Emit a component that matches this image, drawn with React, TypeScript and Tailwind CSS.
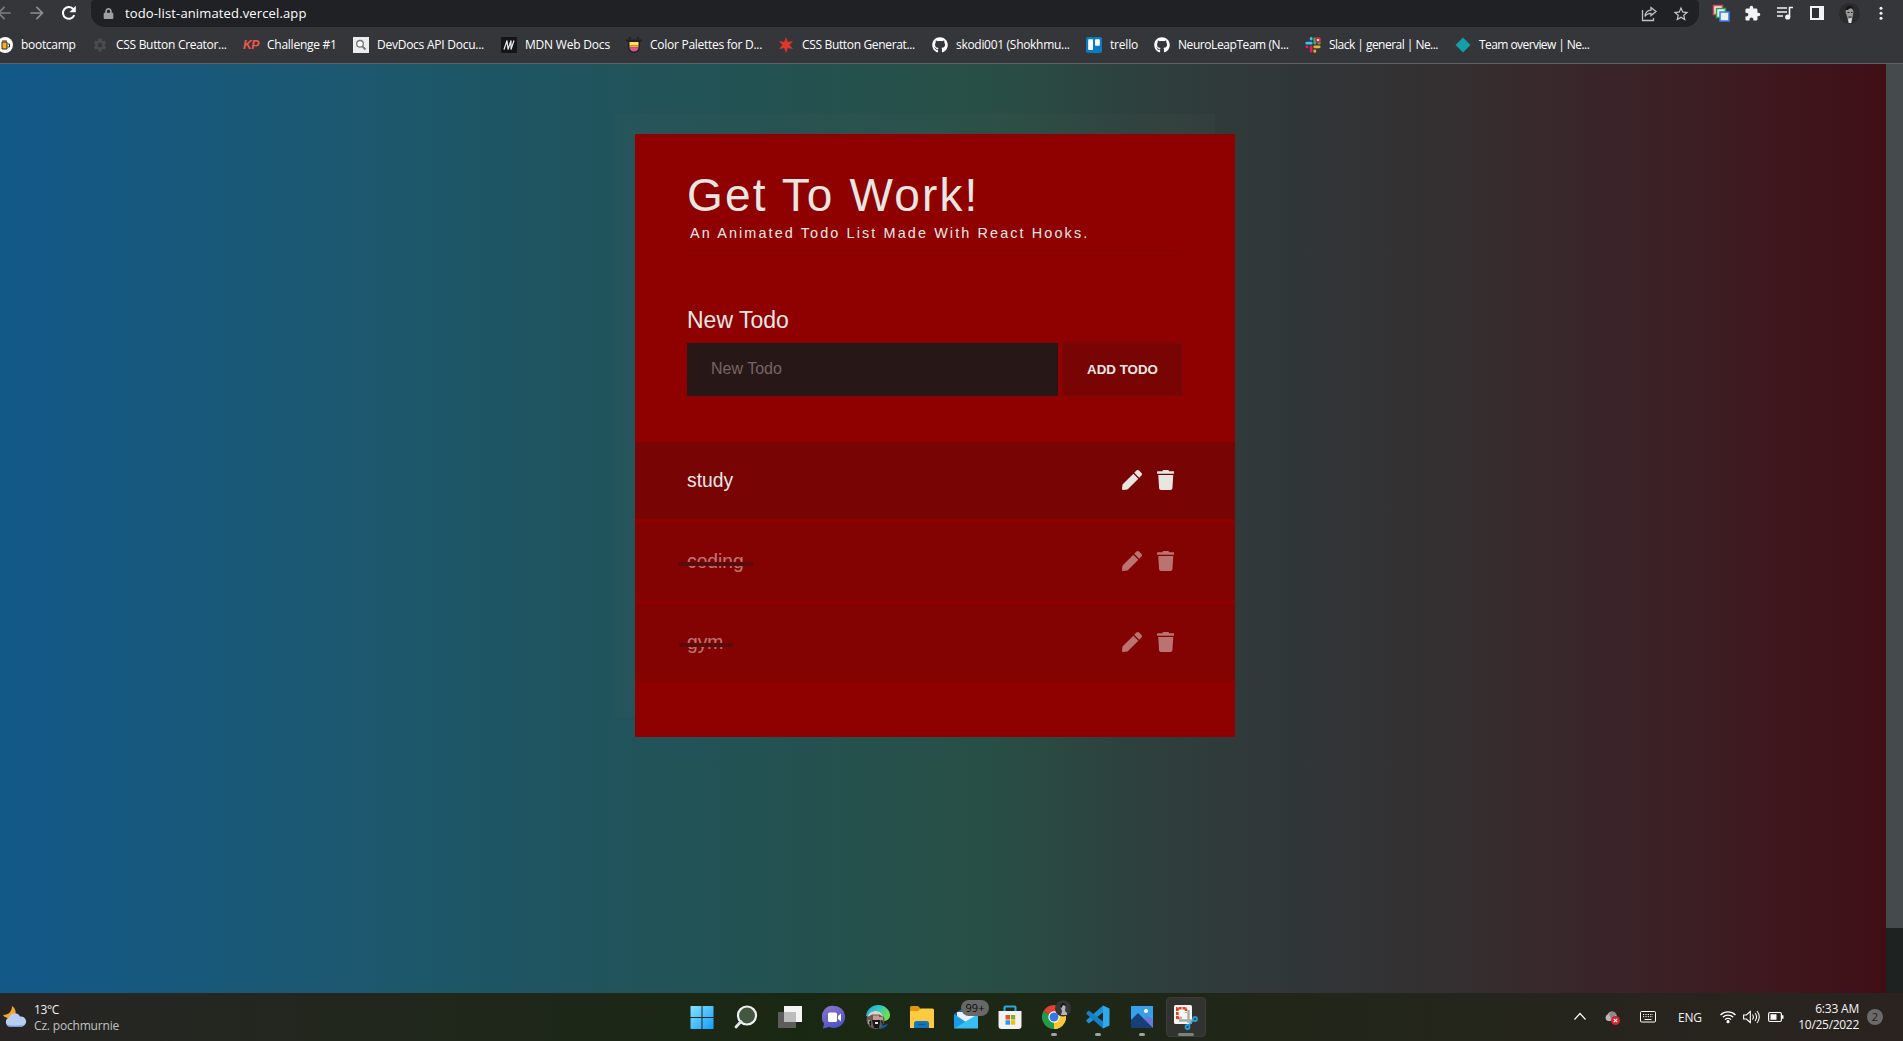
import React from "react";
import { FaPen, FaTrash, FaGithub, FaLock } from "react-icons/fa";
import { MdExtension, MdArrowBack, MdArrowForward, MdStarBorder, MdSettings } from "react-icons/md";

function Cell({ w, children }: { w: string; children?: React.ReactNode }) {
  return <div className={`${w} flex h-full shrink-0 items-center justify-center`}>{children}</div>;
}

function Toolbar() {
  return (
    <div className="flex h-[27px] shrink-0 items-center pb-px text-[#f1f3f4]">
      <div className="-ml-[6px] flex w-[97px] shrink-0 items-center">
        <MdArrowBack className="size-5 shrink-0 text-[#7c7e82]" />
        <MdArrowForward className="ml-[13px] size-5 shrink-0 text-[#8b8d91]" />
        <svg className="ml-[14px] size-4 shrink-0" viewBox="0 0 16 16" fill="none" stroke="#fff" strokeWidth="2">
          <path d="M13.3 10.200a5.900 5.900 0 1 1-.8-5.900" />
          <path d="M14.800 .8v6.400H8.400z" fill="#fff" stroke="none" />
        </svg>
      </div>
      <div className="mb-[-1px] flex h-[27px] w-[1608px] shrink-0 items-center rounded-b-[14px] rounded-t-[4px] bg-[#202124] pl-[12px]">
        <FaLock className="size-[11px] shrink-0 text-[#9aa0a6]" />
        <span className="ml-[11px] flex-1 text-[13px] tracking-[0.14px] text-white">todo-list-animated.vercel.app</span>
        <svg className="mr-[14px] size-[18px]" viewBox="0 0 18 18" fill="none" stroke="#bdc1c6" strokeWidth="1.3">
          <path d="M2.500 5v10.500h11V13" />
          <path d="M11 2.500 16 6.600l-5 4V8.300C8 8.200 6.300 9.300 5 11.500c.3-3.600 2.500-6.200 6-6.400z" />
        </svg>
        <MdStarBorder className="mr-[9px] size-[18px] text-[#c4c7cb]" />
      </div>
      <Cell w="ml-[5px] w-[33px]">
        <svg className="size-[18px]" viewBox="0 0 18 18" strokeWidth="1.500">
          <path d="M1.500 1.500h9v9h-9z" fill="#fde7ea" stroke="#e0455e" />
          <path d="M4.500 4.500h9v9h-9z" fill="#e3f5e8" stroke="#21a453" />
          <path d="M8 8h9v9H8z" fill="#eaf1fe" stroke="#3a7be8" />
        </svg>
      </Cell>
      <Cell w="w-[31px]"><MdExtension className="size-[17px]" /></Cell>
      <Cell w="w-[33px]">
        <svg className="size-[18px]" viewBox="0 0 18 18" fill="none" stroke="#f1f3f4" strokeWidth="1.600">
          <path d="M1 4h10M1 8h10M1 12h6M13.500 13V3.500H17" />
          <circle cx="11.700" cy="13" r="1.800" fill="#f1f3f4" />
        </svg>
      </Cell>
      <Cell w="w-[32px]">
        <svg className="size-[14px]" viewBox="0 0 14 14"><path d="M0 0h14v14H0z" fill="#f1f3f4" /><path d="M2 2h7v10H2z" fill="#303134" /></svg>
      </Cell>
      <Cell w="w-[32px]">
        <svg className="size-[21px]" viewBox="0 0 21 21">
          <circle cx="10.500" cy="10.500" r="10.500" fill="#2b2b2b" />
          <path d="M6.500 9c0-5 7.500-5.500 8 0l-1 5-1 6h-3L8.500 15z" fill="#9a9a9a" />
          <path d="M6.500 7c0-5 7.500-6 8-.5l-2-2-4 2.500z" fill="#161616" />
          <path d="M8.500 9.500h2m1.500 0h1.500M9.500 14h3" stroke="#1b1b1b" strokeWidth="1.100" />
          <path d="m9.300 16 3.400-1-.7 5h-2z" fill="#e4e4e4" />
        </svg>
      </Cell>
      <Cell w="w-[31px]">
        <svg className="size-4" viewBox="0 0 16 16" fill="#f1f3f4"><circle cx="8" cy="3.300" r="1.500" /><circle cx="8" cy="8.300" r="1.500" /><circle cx="8" cy="13.300" r="1.500" /></svg>
      </Cell>
    </div>
  );
}

const bookmarks: { label: string; w: string; fit: string; icon: React.ReactNode }[] = [
  { label: "bootcamp", w: "w-[95px]", fit: "tracking-[-0.3px]", icon: (
    <svg viewBox="0 0 16 16"><circle cx="8" cy="8" r="8" fill="#fff" /><path d="M5 5h5v7H5z" fill="#f5b21b" stroke="#3a2a10" /><path d="M10.500 7h2v3h-2M5 4h5" stroke="#3a2a10" fill="none" /></svg>) },
  { label: "CSS Button Creator...", w: "w-[151px]", fit: "tracking-[-0.3px]", icon: <MdSettings className="size-4 text-[#4b4c50]" /> },
  { label: "Challenge #1", w: "w-[110px]", fit: "tracking-[-0.25px]", icon: (
    <span className="font-['Liberation_Sans'] text-[12px] font-bold italic tracking-[-0.3px] text-[#f0584c]">KP</span>) },
  { label: "DevDocs API Docu...", w: "w-[148px]", fit: "tracking-[-0.25px]", icon: (
    <svg viewBox="0 0 16 16"><path d="M0 0h16v16H0z" fill="#ececec" /><circle cx="7" cy="6.800" r="3.300" fill="#fafafa" stroke="#777" strokeWidth="1.300" /><path d="m9.500 9.500 3 3" stroke="#777" strokeWidth="1.800" /></svg>) },
  { label: "MDN Web Docs", w: "w-[125px]", fit: "tracking-[-0.2px]", icon: (
    <svg viewBox="0 0 16 16" fill="none"><path d="M0 0h16v16H0z" fill="#15141a" /><path d="m3 12.500 3-9 1 9 3-9v9l3-9" stroke="#e8e8e8" strokeWidth="1.200" /></svg>) },
  { label: "Color Palettes for D...", w: "w-[152px]", fit: "tracking-[-0.27px]", icon: (
    <svg viewBox="0 0 16 16"><path d="M0 2.500h16v2h-2V10a6 6 0 0 1-12 0V4.500H0z" fill="#202124" /><circle cx="4" cy="1" r="1.200" fill="#202124" /><circle cx="12" cy="1" r="1.200" fill="#202124" /><path d="M3.500 5h9v3.500h-9z" fill="#ffe454" /><path d="M3.500 8.500h9v2h-9z" fill="#ff9f4a" /><path d="M3.500 10.500h9a4.500 4 0 0 1-9 0z" fill="#d9578f" /></svg>) },
  { label: "CSS Button Generat...", w: "w-[154px]", fit: "tracking-[-0.34px]", icon: (
    <svg viewBox="0 0 16 16"><path d="m8 0 1.800 4.900L15 4l-3.400 4L15 12l-5.200-.9L8 16l-1.800-4.900L1 12l3.400-4L1 4l5.200.9z" fill="#e0352b" /></svg>) },
  { label: "skodi001 (Shokhmu...", w: "w-[154px]", fit: "tracking-[-0.3px]", icon: <FaGithub className="size-4 text-white" /> },
  { label: "trello", w: "w-[68px]", fit: "tracking-[-0.2px]", icon: (
    <svg viewBox="0 0 16 16"><rect width="16" height="16" rx="2" fill="#0a7cc4" /><rect x="2.200" y="2.200" width="4.800" height="10.800" rx=".8" fill="#fff" /><rect x="9" y="2.200" width="4.800" height="6.500" rx=".8" fill="#fff" /></svg>) },
  { label: "NeuroLeapTeam (N...", w: "w-[151px]", fit: "tracking-[-0.43px]", icon: <FaGithub className="size-4 text-white" /> },
  { label: "Slack | general | Ne...", w: "w-[150px]", fit: "tracking-[-0.53px]", icon: (
    <svg viewBox="0 0 16 16" fill="none" strokeWidth="2.800" strokeLinecap="round">
      <path d="M1.800 6.200h4.400M6.200 1.500v.6" stroke="#36c5f0" /><path d="M9.800 1.800v4.400M14 6.200h.3" stroke="#2eb67d" />
      <path d="M14.200 9.800H9.800M9.800 14v.4" stroke="#ecb22e" /><path d="M6.200 14.200V9.800M1.800 9.800H2" stroke="#e01e5a" />
      <circle cx="13" cy="3" r="3" fill="#e0222f" /><circle cx="13" cy="3" r="1.300" fill="#fff" />
    </svg>) },
  { label: "Team overview | Ne...", w: "w-[160px]", fit: "tracking-[-0.57px]", icon: (
    <svg viewBox="0 0 16 16"><path d="m8 .5 7.500 7.500L8 15.500.500 8z" fill="#149eaa" /></svg>) },
];

function Bookmarks() {
  return (
    <div className="-ml-[3px] flex h-[36px] shrink-0 items-center text-[12px] text-white">
      {bookmarks.map((b) => (
        <div key={b.label} className={`${b.w} flex shrink-0 items-center gap-2 whitespace-nowrap`}>
          <span className="flex size-4 shrink-0 items-center justify-center">{b.icon}</span>
          <span className={b.fit}>{b.label}</span>
        </div>
      ))}
    </div>
  );
}

function Todo({ text, done, strike }: { text: string; done?: boolean; strike?: string }) {
  return (
    <li className={`flex h-[77px] items-center justify-between bg-[#780404] pl-[52px] pr-[61px] ${done ? "opacity-50" : ""}`}>
      <span className="relative text-[19.300px] leading-6 text-[#ebe8e4]">
        {text}
        {done && <span className={`absolute left-[-8px] top-[12px] h-1 bg-[#281717] ${strike}`} />}
      </span>
      <span className="mb-[2px] flex items-center gap-[15px] text-[20px] text-[#e8e6e1]">
        <FaPen />
        <FaTrash className="w-[17.500px]" />
      </span>
    </li>
  );
}

function TodoCard() {
  return (
    <main className="mt-[70px] flex h-[603px] w-[600px] flex-col bg-[#8f0000] font-['Liberation_Sans',Arial,sans-serif] text-[#ebe8e4] shadow-[-20px_-20px_0_0_rgba(100,100,100,0.08)]">
      <header className="mx-[52px] mr-[53px] h-[120px] border-b border-[#7a0c0c] pt-[35px]">
        <h1 className="whitespace-nowrap text-[46px] leading-[52px] tracking-[2.150px] text-[#e8e6e1]">Get To Work!</h1>
        <p className="ml-[3px] mt-[4px] whitespace-nowrap text-[14.400px] leading-4 tracking-[2.120px]">An Animated Todo List Made With React Hooks.</p>
      </header>
      <form className="mx-[52px] mt-[53px]">
        <label className="block text-[23px] leading-[26px]">New Todo</label>
        <div className="mt-[10px] flex h-[53px] gap-[5px]">
          <div className="flex w-[371px] items-center bg-[#281717] pb-[2px] pl-6 text-[16px] text-[#736765]">New Todo</div>
          <div className="flex w-[119px] items-center justify-center border border-[#6c0d0d] bg-[#780404] text-[13.333px] font-bold">ADD TODO</div>
        </div>
      </form>
      <ul className="mt-[46px] flex flex-col gap-1">
        <Todo text="study" />
        <Todo text="coding" done strike="w-[74px]" />
        <Todo text="gym" done strike="w-[54px]" />
      </ul>
    </main>
  );
}

const apps: { name: string; mark?: string; icon: React.ReactNode }[] = [
  { name: "start", icon: (
    <svg viewBox="0 0 24 24"><defs><linearGradient id="win" x2="1" y2="1" gradientUnits="objectBoundingBox"><stop stopColor="#86e2ff" /><stop offset="1" stopColor="#119dfb" /></linearGradient></defs>
      <path d="M.5 1.500a.5.500 0 0 1 .5-.5h10.500v11H.5zM12.500 1H23a.5.500 0 0 1 .5.500V12h-11zM.5 13h11v11H1a.5.500 0 0 1-.5-.5zM12.500 13h11v10.500a.5.500 0 0 1-.5.500H12.500z" fill="url(#win)" /></svg>) },
  { name: "search", icon: (
    <svg viewBox="0 0 24 24"><circle cx="13" cy="10.500" r="9" fill="#43563f" stroke="#eef1f2" strokeWidth="2.200" /><path d="m7 16.500-5 5.500" stroke="#e2e6e8" strokeWidth="2.800" strokeLinecap="round" /></svg>) },
  { name: "task view", icon: (
    <svg viewBox="0 0 24 24"><path d="M6 1h18v16H6z" fill="#f4f4f4" /><path d="M0 7h18v16H0z" fill="#5d5d5d" /><path d="M6 7h12v10H6z" fill="#bcbcbc" /></svg>) },
  { name: "chat", icon: (
    <svg viewBox="0 0 24 24"><defs><linearGradient id="chat" x2=".4" y2="1"><stop stopColor="#8d76c9" /><stop offset="1" stopColor="#4f53c8" /></linearGradient></defs>
      <path d="M12.500 1a11 11 0 1 1-5 21L1 23.500l1-5A11 11 0 0 1 12.500 1z" fill="url(#chat)" /><rect x="6" y="7.500" width="9" height="9.500" rx="1.500" fill="#fff" /><path d="m16 11 3-2.500v8L16 14z" fill="#fff" /></svg>) },
  { name: "edge", icon: (
    <svg viewBox="0 0 24 24"><defs><linearGradient id="edge" x2="1" y2=".5"><stop stopColor="#1f9fe0" /><stop offset=".5" stopColor="#2cc9c5" /><stop offset="1" stopColor="#72e04c" /></linearGradient></defs>
      <path d="M0 11C1 4 6 0 12 0c7 0 12 5 12 10 0 4-3 6-7 6L9 12z" fill="url(#edge)" /><path d="M12 20c5 1 8 0 10.500-2-2 4-5.500 6-9.500 6z" fill="#0f5aa8" />
      <circle cx="9.500" cy="15" r="9" fill="#6a5a57" /><path d="M1.500 12c2-8 14-8 16 0l-4-2.500H6z" fill="#d9d4cc" /><path d="M2 15h3v4H2zM13 12h4v3h-4z" fill="#a9a29c" /><path d="M7 10.500h6V15H7z" fill="#c79c8a" /><path d="M6 15h8v2l-1 6H8zM3 17l2-2v7zM15 15l2 2-1 4z" fill="#161616" /><path d="M9 17h3v2H9z" fill="#e8e4e0" /></svg>) },
  { name: "files", icon: (
    <svg viewBox="0 0 24 24"><path d="M0 2.500A1.500 1.500 0 0 1 1.500 1H8l2.500 2.500V8H0z" fill="#e0970c" /><path d="M0 6h8l3-2.500h11.500A1.500 1.500 0 0 1 24 5v18H0z" fill="#fccb3f" /><path d="M4 23v-4.500A2.500 2.500 0 0 1 6.500 16h10a2.500 2.500 0 0 1 2.500 2.500V23z" fill="#1576bd" /><path d="M8 19.500h7.500" stroke="#0c5c9b" strokeWidth="1.400" /></svg>) },
  { name: "mail", icon: (
    <svg viewBox="0 0 24 24"><path d="m0 9 12-8 12 8v14H0z" fill="#1565ae" /><path d="M3 7h18v10H3z" fill="#e9f3fb" /><path d="m0 9 12 8L0 23.500z" fill="#1a9be3" /><path d="M24 9v14.500H0z" fill="#3abdf2" /></svg>) },
  { name: "store", icon: (
    <svg viewBox="0 0 24 24"><path d="M6.500 7V2.500a1 1 0 0 1 1-1h9a1 1 0 0 1 1 1V7" fill="none" stroke="#2aabe4" strokeWidth="2" /><path d="M.5 6h23v15a3 3 0 0 1-3 3h-17a3 3 0 0 1-3-3z" fill="#f2f2f2" /><path d="M7.500 10H12v4.500H7.500z" fill="#e8522a" /><path d="M12.800 10h4.400v4.500h-4.400z" fill="#7fb51c" /><path d="M7.500 15.300H12v4.400H7.500z" fill="#1c9fe8" /><path d="M12.800 15.300h4.400v4.400h-4.400z" fill="#fbb716" /></svg>) },
  { name: "chrome", mark: "w-1.5 bg-[#a0a29e]", icon: (
    <svg viewBox="0 0 24 24" overflow="visible"><path d="M12 12 1.600 6A12 12 0 0 1 22.400 6z" fill="#e53e33" /><path d="M12 12 22.400 6A12 12 0 0 1 12 24z" fill="#fcc934" /><path d="M12 12v12A12 12 0 0 1 1.600 6z" fill="#24984b" /><path d="M12 6.500h10.600A12 12 0 0 1 12 24l5-9z" fill="#fcc934" /><circle cx="12" cy="12" r="5.700" fill="#fff" /><circle cx="12" cy="12" r="4.500" fill="#3578e5" />
      <circle cx="21" cy="3.500" r="8" fill="#363636" /><path d="M18.500 2c0-4 5-4 5 0l-.5 4 2 2v2h-6l1-4z" fill="#b4b4b4" /><path d="M18 2c0-5 6-5 6-1l-3-1-1.500 3z" fill="#171717" /></svg>) },
  { name: "code", mark: "w-1.5 bg-[#a0a29e]", icon: (
    <svg viewBox="0 0 24 24"><path d="m17 .5 6.500 3v17l-6.500 3z" fill="#31a8ec" /><path d="M17 .5v7L3 18.500.500 16.500V15z" fill="#1f8fd8" /><path d="M.5 9V7.500L3 5.500l14 11v7z" fill="#1580c6" /></svg>) },
  { name: "photos", mark: "w-1.5 bg-[#a0a29e]", icon: (
    <svg viewBox="0 0 24 24"><path d="M1 1h22v22H1z" fill="#36a0ec" /><path d="m12 16 5-6 6 5v8H12z" fill="#6b77d6" /><path d="M1 15 8 8l15 15H1z" fill="#173f78" /><circle cx="16" cy="6" r="2" fill="#fff" /></svg>) },
  { name: "snip", mark: "w-4 bg-[#7d7f7c]", icon: (
    <svg viewBox="0 0 24 24" overflow="visible"><rect width="18" height="19" rx="1.500" fill="#f5f5f5" /><path d="M3.300 14V3.300H13" fill="none" stroke="#dc4218" strokeWidth="2.600" strokeDasharray="3 1" /><path d="M12 3.500v4M3 13h4.500" stroke="#dc4218" strokeWidth="2.500" strokeDasharray="2.500 1" /><path d="M14.500 5v13M5 15.500h14" stroke="#a9acad" strokeWidth="2.400" /><circle cx="21" cy="14" r="2" fill="none" stroke="#20a0dd" strokeWidth="1.800" /><circle cx="13.500" cy="22" r="2" fill="none" stroke="#20a0dd" strokeWidth="1.800" /><path d="m15 20 4-4.500" stroke="#20a0dd" strokeWidth="1.500" /></svg>) },
];

function Taskbar() {
  return (
    <footer className="flex h-12 shrink-0 items-center bg-linear-to-r from-[#272524] via-[#192813] via-42% to-[#2a2320] text-[12px] text-[#f4f4f4]">
      <div className="flex w-[680px] shrink-0 items-center pl-[3px]">
        <svg className="size-6" viewBox="0 0 24 24">
          <path d="M9 1c5 3 5 11-1 12-4 .5-7-1-8-3 6 0 9-4 9-9z" fill="#f5a623" />
          <path d="M6.500 21.500a4.700 4.700 0 0 1-.5-9 6 6 0 0 1 11-1 5 5 0 1 1 2 10z" fill="#b7cdf3" /><path d="M4 20c5 1 11 1 17 0-1 1.500-2 1.800-4 1.800H7c-1.500 0-2.500-.5-3-1.800z" fill="#7da2e3" />
        </svg>
        <div className="ml-[7px] mt-[2px] whitespace-nowrap leading-4">
          <div className="tracking-[-0.4px]">13°C</div>
          <div className="tracking-[-0.180px] text-[#c3c2c1]">Cz. pochmurnie</div>
        </div>
      </div>
      {apps.map((a) => (
        <div key={a.name} className="relative flex h-12 w-11 shrink-0 items-center justify-center">
          <div className={`flex size-10 items-center justify-center rounded ${a.name === "snip" ? "border border-[#3c3d38] bg-[#32332e]" : ""}`}>
            <div className="size-6">{a.icon}</div>
          </div>
          {a.mark && <span className={`absolute bottom-[5px] left-1/2 h-[3px] -translate-x-1/2 rounded-full ${a.mark}`} />}
          {a.name === "mail" && <span className="absolute left-[17px] top-[7px] flex h-4 w-[28px] items-center justify-center rounded-full bg-[#686868] text-[11px] text-[#0c0c0c]">99+</span>}
        </div>
      ))}
      <div className="flex flex-1 items-center justify-end pr-5">
        <svg className="h-3 w-3" viewBox="0 0 12 12" fill="none" stroke="#fff" strokeWidth="1.200"><path d="m.5 8.500 5.500-6 5.500 6" /></svg>
        <svg className="ml-[18px] size-4" viewBox="0 0 16 16"><path d="M4 12a3.500 3.500 0 0 1-.5-6.500C6 1 11 2 12.500 6l1 6z" fill="#b9b9b9" /><path d="M5 5c3-3.500 6-2.500 7.500.5L7 10z" fill="#8a8a8a" /><circle cx="11.500" cy="11.500" r="4.500" fill="#d9202c" /><path d="m9.800 9.800 3.400 3.400m0-3.400-3.400 3.400" stroke="#fff" strokeWidth="1.200" /></svg>
        <svg className="ml-5 size-4" viewBox="0 0 16 16" fill="none" stroke="#fff"><rect x=".5" y="2.500" width="15" height="10.500" rx="1" /><path d="M3 5.500h10M3 7.700h10" strokeDasharray="1.200 1.200" /><path d="M4.500 10.500h7" /></svg>
        <span className="ml-[22px] mt-px w-[24px] text-[12px] tracking-[-0.2px]">ENG</span>
        <svg className="ml-[18px] size-4" viewBox="0 0 16 16" fill="none" stroke="#fff" strokeWidth="1.200"><path d="M.5 6a10.600 10.600 0 0 1 15 0M2.800 8.300a7.400 7.400 0 0 1 10.400 0M5 10.600a4.200 4.200 0 0 1 6 0" /><circle cx="8" cy="12.700" r="1" fill="#fff" /></svg>
        <svg className="ml-[7px] h-4 w-[17px]" viewBox="0 0 17 16" fill="none" stroke="#fff" strokeWidth="1.100"><path d="M.6 6h2.700l4-3.500v11l-4-3.500H.6z" /><path d="M9.500 5.500c1 1.500 1 3.500 0 5M12 4c1.800 2.300 1.800 5.700 0 8M14 2c3 3.500 3 8.500 0 12" /></svg>
        <svg className="ml-2 h-4 w-4" viewBox="0 0 16 16"><rect x=".6" y="3.500" width="12.800" height="9" rx="1.500" fill="none" stroke="#fff" strokeWidth="1.200" /><path d="M2.500 5.300h6v5.400h-6zM14 6.300h1.500v3.400H14z" fill="#fff" /></svg>
        <div className="ml-[14px] w-[61px] whitespace-nowrap leading-4">
          <div className="flex justify-end tracking-[-0.2px]">6:33 AM</div>
          <div className="flex justify-end tracking-[-0.300px]">10/25/2022</div>
        </div>
        <span className="ml-2 flex size-4 items-center justify-center rounded-full bg-[#6b6a68] text-[11px] text-[#1c1c1c]">2</span>
      </div>
    </footer>
  );
}

export default function App() {
  return (
    <div className="flex h-[1041px] w-[1903px] flex-col overflow-hidden bg-[#35363a] font-['Open_Sans','Noto_Sans',sans-serif]">
      <Toolbar />
      <Bookmarks />
      <div className="h-px shrink-0 bg-[#606164]" />
      <div className="flex h-[929px] shrink-0">
        <div className="w-[1886px] bg-[linear-gradient(to_right,#125888_0%,#1b5871_17%,#215358_35%,#275048_50%,#284e44_53%,#2e3f3c_61%,#313537_70%,#343031_76%,#3b2227_87%,#400f16_100%)] pl-[635px]">
          <TodoCard />
        </div>
        <div className="w-[17px] bg-[#1e2322]">
          <div className="h-[864px] bg-[#454a4d]" />
        </div>
      </div>
      <Taskbar />
    </div>
  );
}
